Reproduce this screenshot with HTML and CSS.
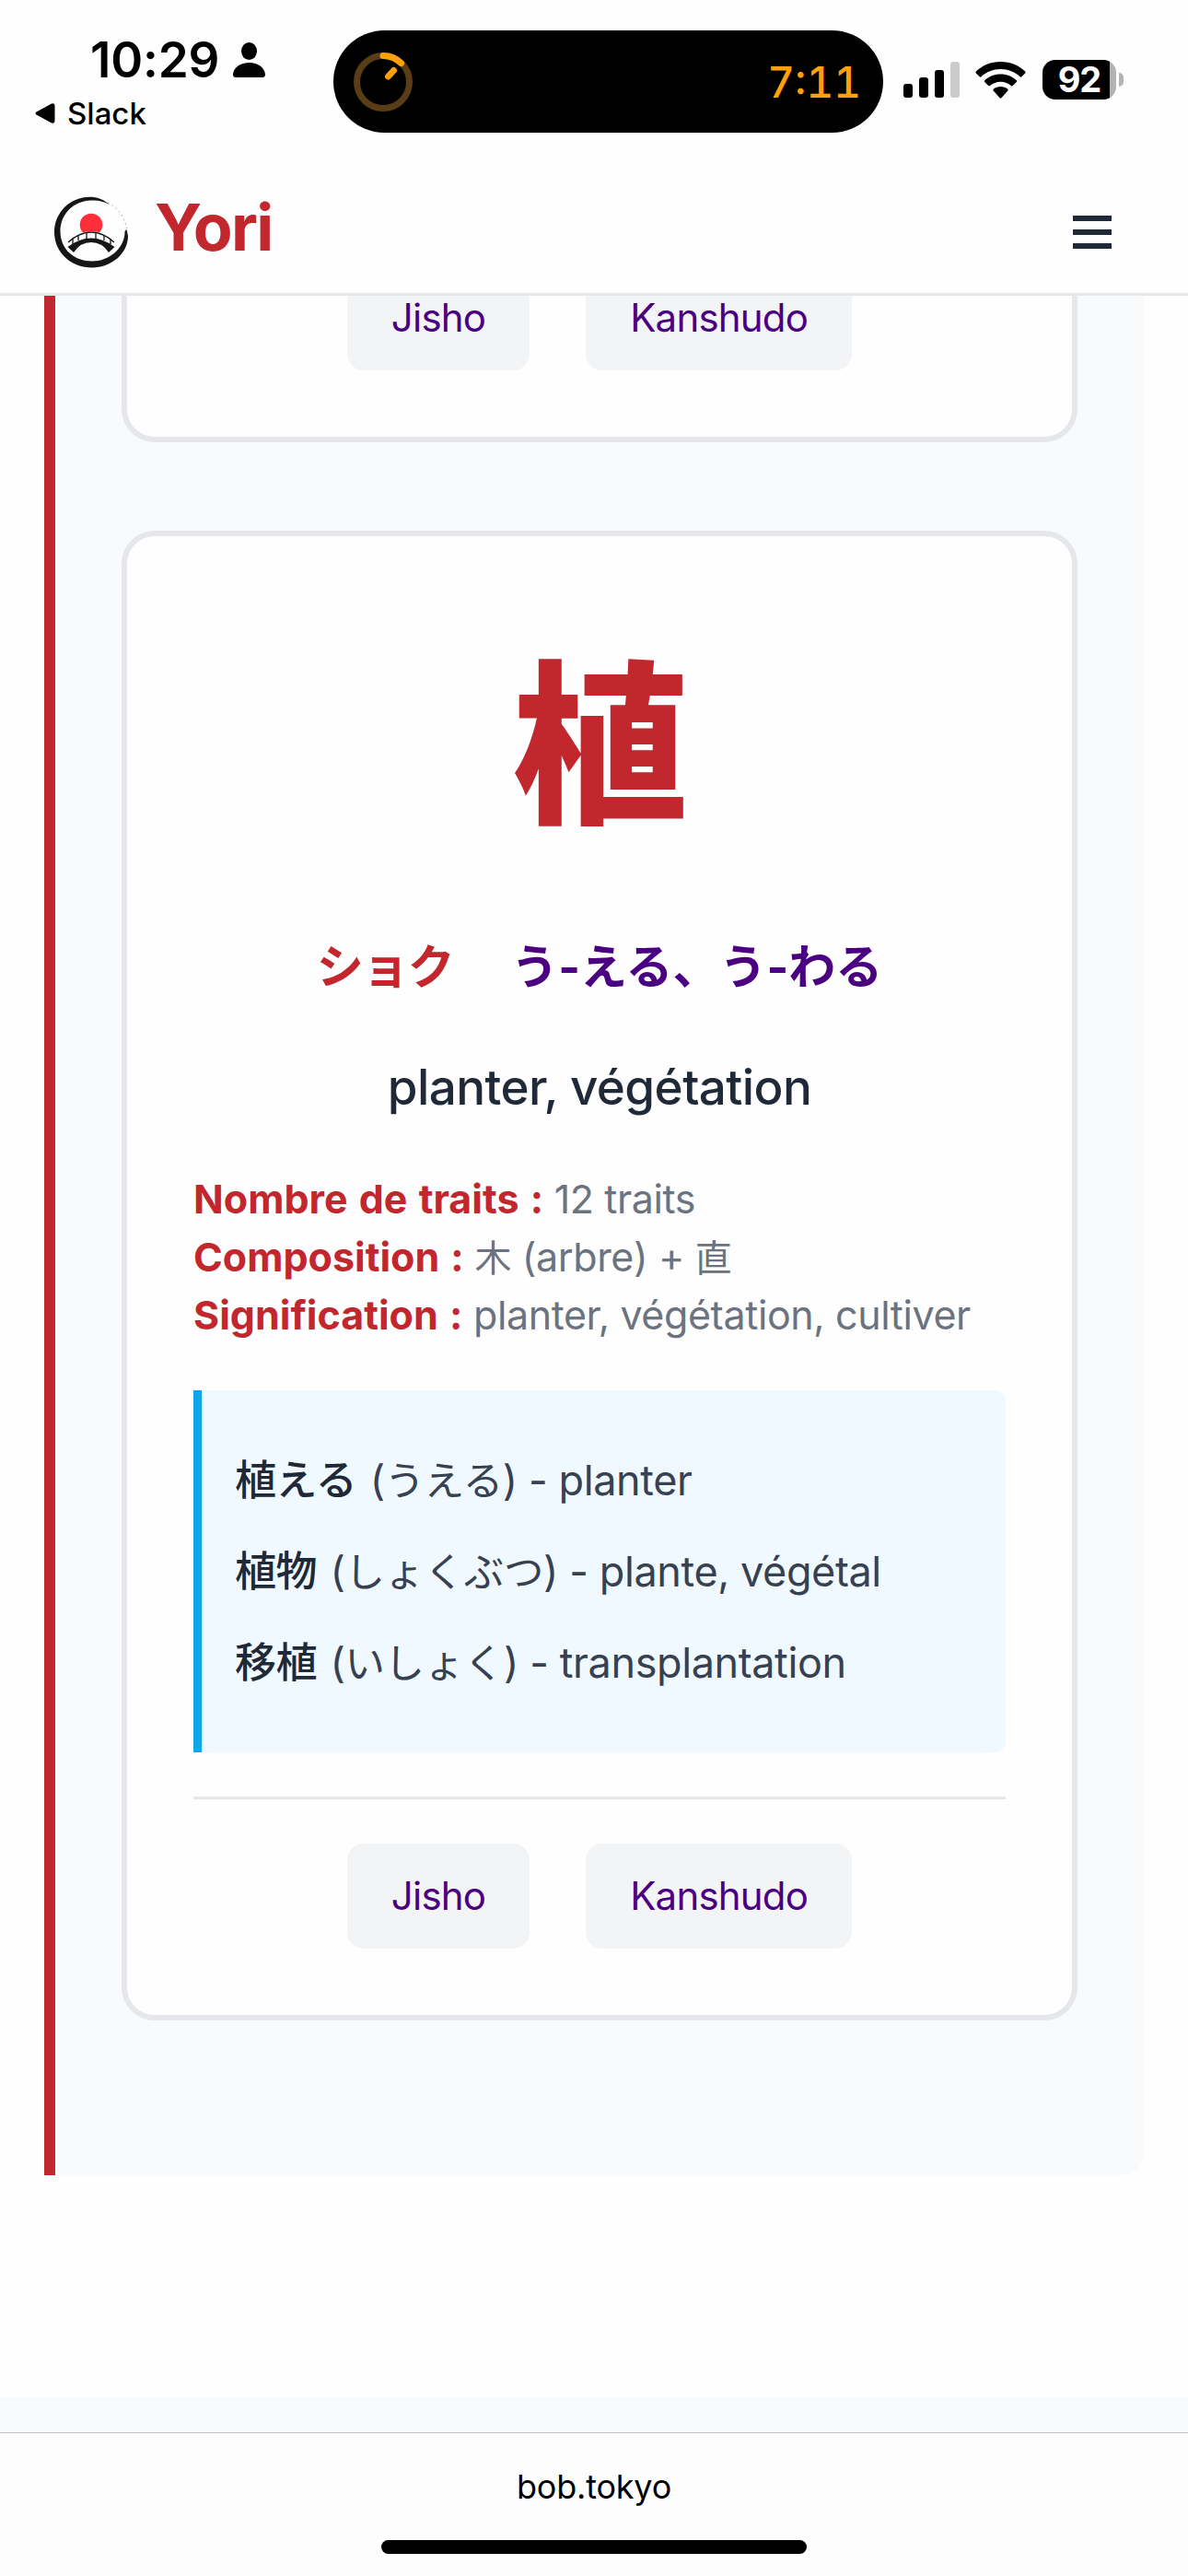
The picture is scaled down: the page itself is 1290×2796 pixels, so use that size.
FILE: index.html
```html
<!DOCTYPE html>
<html lang="fr">
<head>
    <meta charset="UTF-8">
    <meta name="viewport" content="width=device-width, initial-scale=1.0">
    <title>Yori</title>
    <link rel="stylesheet" href="styles.css">
</head>
<body>

<div class="status-bar">
    <div class="status-left">
        <div class="clock">
            <span class="time">10:29</span>
            <svg class="person" viewBox="0 0 35 38">
                <ellipse cx="17.5" cy="9.5" rx="8.5" ry="9.5"/>
                <path d="M3 38 Q0 38 0 34.500 C1 27 8 22 17.500 22 S34 27 35 34.500 Q35 38 32 38 Z"/>
            </svg>
        </div>
        <div class="back">
            <svg class="back-arrow" viewBox="0 0 22 22"><path d="M1.500 9.500 L18 0.600 Q21.500 -0.500 21.500 3 V19 Q21.500 22.500 18 21.400 L1.500 12.500 Q-0.500 11 1.500 9.500 Z"/></svg>
            <span class="back-label">Slack</span>
        </div>
    </div>
    <div class="island">
        <svg class="timer-ring" viewBox="0 0 64 64">
            <circle cx="32" cy="32" r="28.5" fill="none" stroke="#593d17" stroke-width="7"/>
            <path d="M32 3.500 A28.500 28.500 0 0 1 51.500 11.500 M37.500 26 L43.500 19.500" fill="none" stroke="#ff9f0a" stroke-width="7" stroke-linecap="round"/>
        </svg>
        <span class="timer">7:11</span>
    </div>
    <div class="status-right">
        <svg class="signal" viewBox="0 0 62 40">
            <rect x="0" y="24" width="10" height="15" rx="3"/>
            <rect x="17" y="17" width="10" height="22" rx="3"/>
            <rect x="34" y="9" width="10" height="30" rx="3"/>
            <rect x="51" y="0" width="10" height="39" rx="3" fill="#cbcbcb"/>
        </svg>
        <svg class="wifi" viewBox="0 0 55 40">
            <path d="M27.500 0 C17 0 7.500 4 0.800 10.600 Q0 11.500 0.800 12.400 L4.700 16.300 Q5.600 17 6.500 16.200 C12 11 19.500 8 27.500 8 S43 11 48.500 16.200 Q49.400 17 50.300 16.300 L54.200 12.400 Q55 11.500 54.200 10.600 C47.500 4 38 0 27.500 0 Z"/>
            <path d="M27.500 13.500 C20.700 13.500 14.600 16 10.200 20.200 Q9.400 21.200 10.200 22 L14.300 26 Q15.200 26.800 16.100 26 C19.200 23.300 23.100 21.700 27.500 21.700 S35.800 23.300 38.900 26 Q39.800 26.800 40.700 26 L44.800 22 Q45.600 21.200 44.800 20.200 C40.400 16 34.300 13.500 27.500 13.500 Z"/>
            <path d="M27.500 27 C24.500 27 21.800 28 19.700 29.800 Q19 30.600 19.700 31.500 L26.600 39.300 Q27.500 40 28.400 39.300 L35.300 31.500 Q36 30.600 35.300 29.800 C33.200 28 30.500 27 27.500 27 Z"/>
        </svg>
        <div class="battery"><span class="battery-level">92</span></div>
        <div class="battery-nub"></div>
    </div>
</div>

<header class="site-header">
    <div class="brand">
        <svg class="logo" viewBox="0 0 80 78">
            <!-- brush circle, thinning out at the upper right -->
            <path d="M40 0.700 C18 0 0 17 0 39 C0 61 18 77.500 41 77.500 C62 77.500 80 62 80 43 L78.500 36 L76.500 38 C77 55 61 70.500 41 70.500 C21 70.500 6.500 57 6.500 38 C6.500 19 21 5 40 4.500 C48 4 53 5.500 60 9 C54 4 48 1 40 0.700 Z" fill="#161616"/>
            <path d="M58 7 C69 12 76 22 78.500 35" fill="none" stroke="#999" stroke-width="0.8" stroke-dasharray="2 3"/>
            <circle cx="40" cy="31" r="12.300" fill="#ff2f39"/>
            <path d="M14 50 Q40 26 66 50 V60 H14 Z" fill="#fefefe"/>
            <path d="M15 50 Q40 28 65 50" fill="none" stroke="#161616" stroke-width="1.500"/>
            <path d="M20 46 V52 M26 42 V48 M35 39.500 V46 M45 39.500 V46 M54 42 V48 M61 46 V52" fill="none" stroke="#161616" stroke-width="1.300"/>
            <path d="M14.500 55 Q40 36 65.500 55 L59 61 Q52 50 40 50 T21 61 Z" fill="#161616"/>
        </svg>
        <span class="brand-name">Yori</span>
    </div>
    <div class="menu">
        <span></span>
        <span></span>
        <span></span>
    </div>
</header>

<main class="page">
    <section class="lesson">
        <div class="card card-cut">
            <div class="links">
                <a class="link">Jisho</a>
                <a class="link">Kanshudo</a>
            </div>
        </div>

        <div class="card">
            <div class="kanji">植</div>
            <div class="readings">
                <span class="on">ショク</span>
                <span class="kun">う-える、う-わる</span>
            </div>
            <div class="meaning">planter, végétation</div>
            <div class="details">
                <div><strong>Nombre de traits :</strong> 12 traits</div>
                <div><strong>Composition :</strong> <span class="part">木</span> (arbre) + <span class="part">直</span></div>
                <div><strong>Signification :</strong> planter, végétation, cultiver</div>
            </div>
            <div class="examples">
                <p><strong>植える</strong> (<span class="kana">うえる</span>) - planter</p>
                <p><strong>植物</strong> (<span class="kana">しょくぶつ</span>) - plante, végétal</p>
                <p><strong>移植</strong> (<span class="kana">いしょく</span>) - transplantation</p>
            </div>
            <div class="links links-ruled">
                <a class="link">Jisho</a>
                <a class="link">Kanshudo</a>
            </div>
        </div>
    </section>
</main>

<div class="footer-edge"></div>

<div class="browser-bar">
    <span class="host">bob.tokyo</span>
    <div class="home-indicator"></div>
</div>

</body>
</html>
```

FILE: styles.css
```css
* {
    box-sizing: border-box;
}
body {
    margin: 0;
    width: 1290px;
    height: 2796px;
    display: flex;
    flex-direction: column;
    overflow: hidden;
    background: #fefefe;
    color: #1f2937;
    font-family: Inter, "Noto Sans CJK JP", sans-serif;
}
svg {
    display: block;
    flex: none;
}

/* Status bar */
.status-bar {
    height: 177px;
    flex: none;
    display: flex;
    align-items: flex-start;
    color: #000;
}
.status-left {
    width: 362px;
    padding-top: 35px;
}
.clock {
    display: flex;
    padding-left: 98px;
    height: 60px;
}
.time {
    width: 155px;
    font-size: 53px;
    line-height: 60px;
    font-weight: 600;
    letter-spacing: -0.2px;
}
.person {
    width: 35px;
    height: 38px;
    margin-top: 11px;
}
.back {
    display: flex;
    align-items: center;
    height: 40px;
    margin-top: 8px;
    padding-left: 38px;
}
.back-arrow {
    width: 22px;
    height: 22px;
}
.back-label {
    margin-left: 13px;
    font-size: 33px;
    line-height: 40px;
    font-weight: 500;
}
.island {
    width: 597px;
    height: 111px;
    margin-top: 33px;
    padding: 0 24px 0 22px;
    border-radius: 56px;
    background: #000;
    display: flex;
    align-items: center;
    justify-content: space-between;
}
.timer-ring {
    width: 64px;
    height: 64px;
}
.timer {
    font-size: 46px;
    font-weight: 500;
    font-variant-numeric: tabular-nums;
    color: #ff9f0a;
}
.status-right {
    display: flex;
    align-items: center;
    height: 43px;
    margin-top: 65px;
    padding-left: 22px;
}
.signal {
    width: 62px;
    height: 40px;
    margin-top: 1px;
}
.wifi {
    width: 55px;
    height: 40px;
    margin-left: 16px;
}
.battery {
    width: 80px;
    height: 43px;
    margin-left: 18px;
    border-radius: 14px;
    background: linear-gradient(to right, #000 73px, #b3b3b3 73px);
    color: #fff;
    text-align: center;
}
.battery-level {
    font-size: 38px;
    line-height: 43px;
    font-weight: 700;
    letter-spacing: -1px;
}
.battery-nub {
    width: 5px;
    height: 15px;
    margin-left: 3px;
    border-radius: 0 5px 5px 0;
    background: #b3b3b3;
}

/* Site header */
.site-header {
    height: 144px;
    flex: none;
    padding: 36px 83px 0 59px;
    border-bottom: 3px solid #e5e7eb;
    display: flex;
    justify-content: space-between;
}
.brand {
    display: flex;
}
.logo {
    width: 80px;
    height: 78px;
}
.brand-name {
    margin-left: 29px;
    margin-top: -9px;
    font-size: 70px;
    line-height: 86px;
    font-weight: 700;
    letter-spacing: -1.7px;
    color: #c1272d;
}
.menu {
    width: 42px;
    padding-top: 21px;
    display: flex;
    flex-direction: column;
    gap: 9px;
}
.menu span {
    height: 6px;
    background: #1f2937;
}

/* Lesson */
.page {
    height: 2280px;
    flex: none;
    padding: 0 48px;
}
.lesson {
    height: 2040px;
    padding: 0 72px;
    border-left: 12px solid #c1272d;
    border-radius: 0 0 24px 0;
    background: #f9fafc;
}
.card {
    height: 1617px;
    padding: 72px;
    border: 6px solid #e5e7eb;
    border-radius: 36px;
    background: #fefefe;
}
.links {
    display: flex;
    justify-content: center;
    gap: 61px;
}
.links-ruled {
    margin-top: 48px;
    padding-top: 48px;
    border-top: 3px solid #e5e7eb;
}
.link {
    height: 114px;
    padding: 0 48px;
    border-radius: 18px;
    background: #f3f4f6;
    color: #4b0082;
    font-size: 42px;
    line-height: 114px;
    letter-spacing: -0.8px;
}
/* previous card, scrolled under the header */
.card-cut {
    height: 159px;
    margin-bottom: 96px;
    padding-top: 0;
    border-top: none;
    border-radius: 0 0 36px 36px;
}
.card-cut .link {
    height: 81px;
    line-height: 48px;
    border-radius: 0 0 18px 18px;
}
.kanji {
    height: 310px;
    font-size: 190px;
    line-height: 310px;
    font-weight: 900;
    color: #c1272d;
    text-align: center;
}
.readings {
    display: flex;
    justify-content: center;
    gap: 63px;
    height: 84px;
    margin-top: 44px;
    font-size: 51px;
    line-height: 84px;
    font-weight: 700;
}
.on {
    color: #c1272d;
    letter-spacing: -1.5px;
}
.kun {
    color: #4b0082;
}
.meaning {
    height: 90px;
    margin-top: 43px;
    font-size: 53px;
    line-height: 90px;
    font-weight: 500;
    letter-spacing: -0.6px;
    text-align: center;
}
.details {
    margin-top: 45px;
    font-size: 43px;
    line-height: 63px;
    letter-spacing: -0.4px;
    color: #6b7280;
    white-space: nowrap;
}
.details div {
    height: 63px;
}
.details strong {
    color: #c1272d;
    letter-spacing: 0;
    word-spacing: 2px;
}
.part {
    font-size: 40px;
}
.examples {
    height: 393px;
    margin-top: 50px;
    padding: 48px 36px;
    border-left: 9px solid #0ea5e9;
    border-radius: 0 12px 12px 0;
    background: #f0f9ff;
    font-size: 45px;
    line-height: 99px;
    letter-spacing: -0.4px;
    color: #374151;
    white-space: nowrap;
}
.examples p {
    height: 99px;
    margin: 0;
}
.examples strong {
    margin-right: 2px;
    font-weight: 500;
    color: #1f2937;
}
.kana {
    font-size: 43.5px;
}

/* Bottom */
.footer-edge {
    height: 39px;
    flex: none;
    background: #f9fafc;
}
.browser-bar {
    height: 156px;
    flex: none;
    border-top: 1px solid #c0c3c8;
    background: #fdfdfe;
    color: #000;
    display: flex;
    flex-direction: column;
    align-items: center;
}
.host {
    margin-top: 36px;
    font-size: 36px;
    line-height: 44px;
    letter-spacing: -0.2px;
}
.home-indicator {
    width: 462px;
    height: 15px;
    margin-top: 36px;
    border-radius: 8px;
    background: #000;
}
```
